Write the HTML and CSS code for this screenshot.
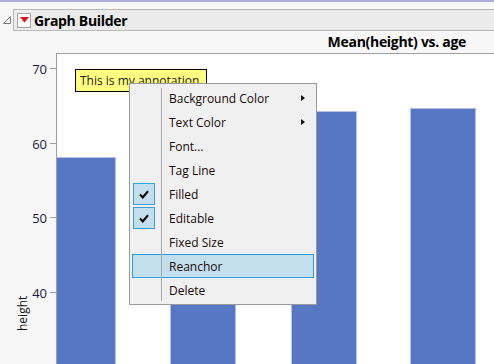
FILE: index.html
```html
<!DOCTYPE html>
<html>
  <head>
    <meta charset="UTF-8">
    <title>Graph Builder</title>
    <link rel="stylesheet" href="styles.css">
  </head>
  <body>
    <div class="topline"></div>
    <div class="outline">
      <div class="disclose">
        <svg width="8" height="8" viewBox="0 0 8 8"><path d="M7.5 0.5 L7.5 7.5 L0.5 7.5 Z" fill="#fff" stroke="#7a7a7a"/></svg>
      </div>
      <div class="titlebar">
        <div class="redbtn">
          <svg width="9" height="6" viewBox="0 0 9 6"><path d="M0 0 L9 0 L4.5 5.5 Z" fill="#e0141e"/></svg>
        </div>
        <span class="outline-title">Graph Builder</span>
      </div>
    </div>

    <div class="graph">
      <div class="corner"></div>
      <div class="graph-title">Mean(height) vs. age</div>

      <div class="axis">
        <div class="tick" style="top: 15px"><span>70</span></div>
        <div class="tick" style="top: 90px"><span>60</span></div>
        <div class="tick" style="top: 164px"><span>50</span></div>
        <div class="tick" style="top: 239px"><span>40</span></div>
        <div class="ylabel">height</div>
      </div>

      <div class="plot">
        <div class="bar" style="left: -7px; top: 103px"></div>
        <div class="bar" style="left: 113px; top: 130px"></div>
        <div class="bar" style="left: 234px; top: 57px"></div>
        <div class="bar" style="left: 353px; top: 54px"></div>
        <div class="annotation">This is my annotation.</div>
      </div>
    </div>

    <div class="menu">
      <div class="item"><span class="mark"></span><span class="label">Background Color</span><span class="arrow"></span></div>
      <div class="item"><span class="mark"></span><span class="label">Text Color</span><span class="arrow"></span></div>
      <div class="item"><span class="mark"></span><span class="label">Font...</span></div>
      <div class="item"><span class="mark"></span><span class="label">Tag Line</span></div>
      <div class="item"><span class="mark checked"><svg width="10" height="9" viewBox="0 0 10 9"><path d="M1 4.6 L3.8 7.4 L9 1.2" fill="none" stroke="#000" stroke-width="2.1"/></svg></span><span class="label">Filled</span></div>
      <div class="item"><span class="mark checked"><svg width="10" height="9" viewBox="0 0 10 9"><path d="M1 4.6 L3.8 7.4 L9 1.2" fill="none" stroke="#000" stroke-width="2.1"/></svg></span><span class="label">Editable</span></div>
      <div class="item"><span class="mark"></span><span class="label">Fixed Size</span></div>
      <div class="item hover"><span class="mark"></span><span class="label">Reanchor</span></div>
      <div class="item"><span class="mark"></span><span class="label">Delete</span></div>
    </div>
  </body>
</html>
```

FILE: styles.css
```css
html, body {
	height: 100%;
	overflow: hidden;
}
body {
	margin: 0;
	background: #f7f7f7;
	font-family: "Open Sans", "Noto Sans", sans-serif;
	font-size: 11px;
	color: #111;
	position: relative;
}
.topline {
	height: 2px;
	background: #aab0d8;
}
.outline {
	display: flex;
	align-items: center;
	margin-top: 7px;
}
.disclose {
	width: 13px;
	height: 22px;
	display: flex;
	align-items: center;
	padding-left: 3px;
	box-sizing: border-box;
}
.titlebar {
	flex: 1;
	height: 20px;
	background: #ebebeb;
	border: 1px solid #b8b8b8;
	border-right: 0;
	display: flex;
	align-items: center;
}
.redbtn {
	width: 12px;
	height: 13px;
	margin-left: 3px;
	background: #fbfbfb;
	border: 1px solid #a8a8a8;
	display: flex;
	align-items: center;
	justify-content: center;
}
.outline-title {
	margin-left: 3px;
	font-weight: 700;
	font-size: 14px;
	color: #000;
	letter-spacing: -0.3px;
}
.graph {
	display: grid;
	grid-template-columns: 56px 1fr;
	grid-template-rows: 22px 1fr;
	height: 333px;
}
.graph-title {
	text-align: right;
	padding-right: 28px;
	font-weight: 700;
	font-size: 14px;
	line-height: 22px;
	color: #000;
	letter-spacing: -0.3px;
}
.axis {
	position: relative;
}
.tick {
	position: absolute;
	right: 0;
	width: 6px;
	height: 1px;
	background: #a0a0a0;
}
.tick span {
	position: absolute;
	right: 9px;
	top: -8px;
	font-size: 13px;
	line-height: 18px;
	color: #1a1a40;
}
.ylabel {
	position: absolute;
	left: 14px;
	top: 278px;
	transform: rotate(-90deg);
	transform-origin: left top;
	font-size: 12px;
	color: #111;
	white-space: nowrap;
}
.plot {
	position: relative;
	background: #fff;
	border-top: 1px solid #a0a0a0;
	border-left: 1px solid #a0a0a0;
	overflow: hidden;
}
.bar {
	position: absolute;
	bottom: 0;
	width: 64px;
	background: #5777c4;
	border: 1px solid #b4c0e6;
	border-bottom: 0;
}
.annotation {
	position: absolute;
	left: 18px;
	top: 15px;
	width: 126px;
	height: 21px;
	background: #ffff80;
	border: 1px solid #000;
	padding-left: 4px;
	font-size: 12px;
	line-height: 21px;
	color: #222;
}
.menu {
	position: absolute;
	left: 129px;
	top: 83px;
	width: 186px;
	padding: 2px 0;
	background: #f0f0f0;
	border: 1px solid #9a9a9a;
}
.menu::before {
	content: "";
	position: absolute;
	left: 31px;
	top: 4px;
	bottom: 3px;
	width: 1px;
	background: #a8a8a8;
	z-index: 1;
}
.item {
	position: relative;
	height: 24px;
	margin: 0 2px;
	display: flex;
	align-items: center;
	box-sizing: border-box;
	border: 1px solid transparent;
}
.item.hover {
	background: #c3deec;
	border-color: #26a0da;
}
.mark {
	width: 22px;
	height: 22px;
	flex: none;
	box-sizing: border-box;
	display: flex;
	align-items: center;
	justify-content: center;
}
.mark.checked {
	background: #c3deec;
	border: 1px solid #3aa0dc;
}
.label {
	margin-left: 14px;
	flex: 1;
	font-size: 12px;
	color: #1a0a0a;
}
.arrow {
	width: 0;
	height: 0;
	margin-right: 8px;
	border-left: 4px solid #111;
	border-top: 3.5px solid transparent;
	border-bottom: 3.5px solid transparent;
}
```
